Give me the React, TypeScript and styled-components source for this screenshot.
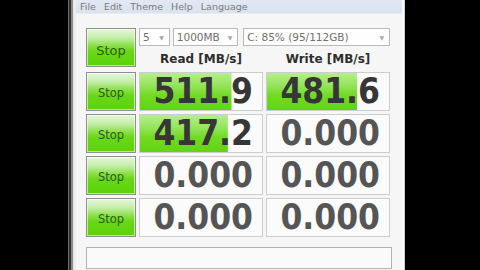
import React from "react";
import styled, { createGlobalStyle } from "styled-components";

const Global = createGlobalStyle`
  html, body { margin: 0; padding: 0; background: #000; }
  body { width: 480px; height: 270px; overflow: hidden; font-family: "DejaVu Sans", sans-serif; }
`;

const Screen = styled.div`
  display: flex;
  width: 480px;
  height: 270px;
  background: #000;
`;

const Blank = styled.div<{ $w: number }>`
  width: ${(p) => p.$w}px;
  flex: none;
  background: #000;
`;

const Window = styled.div`
  display: flex;
  width: 337px;
  flex: none;
  height: 270px;
`;

const LeftFrame = styled.div`
  width: 8px;
  flex: none;
  background: linear-gradient(
    to right,
    #6e6e6e 0px, #6e6e6e 1px,
    #2e2e2e 1px, #2e2e2e 3px,
    #8c8c8c 3px, #8c8c8c 5px,
    #e4e4e4 5px, #f2f2f2 8px
  );
`;

const RightFrame = styled.div`
  width: 5px;
  flex: none;
  background: linear-gradient(
    to right,
    #fbfbfb 0px, #fbfbfb 2px,
    #cfcfcf 2px, #cfcfcf 3px,
    #7e7e7e 3px, #5a5a5a 5px
  );
`;

const Content = styled.div`
  flex: 1;
  display: flex;
  flex-direction: column;
  background: #f6f6f6;
`;

const MenuBar = styled.div`
  height: 13px;
  display: flex;
  align-items: center;
  gap: 8px;
  padding-left: 4px;
  background: linear-gradient(to bottom, #e3e9f3, #d9e2ef);
  border-bottom: 1px solid #e8edf5;
`;

const MenuItem = styled.span`
  font-family: "DejaVu Sans", sans-serif;
  font-size: 9.5px;
  color: #7a7a7a;
  line-height: 12px;
`;

const Body = styled.div`
  padding: 14px 10px 0 10px;
  display: flex;
  flex-direction: column;
`;

const Grid = styled.div`
  display: grid;
  grid-template-columns: 50px 124px 124px;
  grid-template-rows: 41px repeat(4, 39px);
  column-gap: 3px;
  row-gap: 3px;
`;

const StopButton = styled.button<{ $main?: boolean }>`
  height: 39px;
  align-self: start;
  margin: 0;
  padding: 0;
  border: 1px solid #8f8f8f;
  box-shadow: inset 0 0 0 1px rgba(255, 255, 255, 0.55);
  background: linear-gradient(
    to bottom,
    #e6f7dc 0%,
    #c4eea8 24%,
    #93e256 42%,
    #68d816 60%,
    #5cd20a 100%
  );
  font-family: "DejaVu Sans", sans-serif;
  font-size: ${(p) => (p.$main ? "13px" : "11.5px")};
  font-weight: 400;
  color: ${(p) => (p.$main ? "#2c5e10" : "#2f5a1a")};
  display: flex;
  align-items: center;
  justify-content: center;
  padding-top: ${(p) => (p.$main ? "6px" : "2px")};
`;

const Controls = styled.div`
  grid-column: 2 / 4;
  display: flex;
  flex-direction: column;
`;

const SelectRow = styled.div`
  display: flex;
  height: 18px;
`;

const Select = styled.div<{ $w: number; $ml: number }>`
  width: ${(p) => p.$w}px;
  margin-left: ${(p) => p.$ml}px;
  height: 18px;
  box-sizing: border-box;
  border: 1px solid #b9b9b9;
  background: #fefefe;
  display: flex;
  align-items: center;
  justify-content: space-between;
  padding: 0 5px 0 3px;
  font-family: "DejaVu Sans", sans-serif;
  font-size: 10.5px;
  color: #707070;
`;

const Arrow = styled.span`
  font-size: 6px;
  color: #a8a8a8;
`;

const Headers = styled.div`
  display: grid;
  grid-template-columns: 124px 124px;
  column-gap: 3px;
  padding-top: 6px;
`;

const Header = styled.div`
  text-align: center;
  font-family: "DejaVu Sans", sans-serif;
  font-weight: bold;
  font-size: 12px;
  color: #2e2e2e;
  line-height: 14px;
`;

const Cell = styled.div<{ $pct: number }>`
  box-sizing: border-box;
  height: 39px;
  border: 1px solid #cdcdcd;
  background:
    linear-gradient(
      to bottom,
      #b6ee8c 0%,
      #93e45a 35%,
      #72da24 60%,
      #62d412 100%
    ) no-repeat 0 0 / ${(p) => p.$pct}% 100%,
    #fbfbfb;
  display: flex;
  align-items: center;
  justify-content: flex-end;
  padding-right: 9px;
  font-family: "DejaVu Sans Condensed", "DejaVu Sans", sans-serif;
  font-stretch: condensed;
  font-weight: bold;
  font-size: 35px;
  color: ${(p) => (p.$pct > 0 ? "#363636" : "#555555")};
  line-height: 1;
`;

const Comment = styled.div`
  margin-top: 10px;
  width: 306px;
  height: 22px;
  box-sizing: border-box;
  border: 1px solid #b3b3b3;
  background: #fafafa;
`;

const rows = [
  { read: "511.9", rp: 75, write: "481.6", wp: 74 },
  { read: "417.2", rp: 72, write: "0.000", wp: 0 },
  { read: "0.000", rp: 0, write: "0.000", wp: 0 },
  { read: "0.000", rp: 0, write: "0.000", wp: 0 },
];

export default function App() {
  return (
    <>
      <Global />
      <Screen>
        <Blank $w={68} />
        <Window>
          <LeftFrame />
          <Content>
            <MenuBar>
              <MenuItem>File</MenuItem>
              <MenuItem>Edit</MenuItem>
              <MenuItem>Theme</MenuItem>
              <MenuItem>Help</MenuItem>
              <MenuItem>Language</MenuItem>
            </MenuBar>
            <Body>
              <Grid>
                <StopButton $main>Stop</StopButton>
                <Controls>
                  <SelectRow>
                    <Select $w={31} $ml={0}>
                      5<Arrow>▼</Arrow>
                    </Select>
                    <Select $w={66} $ml={3}>
                      1000MB<Arrow>▼</Arrow>
                    </Select>
                    <Select $w={148} $ml={5}>
                      C: 85% (95/112GB)<Arrow>▼</Arrow>
                    </Select>
                  </SelectRow>
                  <Headers>
                    <Header>Read [MB/s]</Header>
                    <Header>Write [MB/s]</Header>
                  </Headers>
                </Controls>
                {rows.map((r, i) => (
                  <React.Fragment key={i}>
                    <StopButton>Stop</StopButton>
                    <Cell $pct={r.rp}>{r.read}</Cell>
                    <Cell $pct={r.wp}>{r.write}</Cell>
                  </React.Fragment>
                ))}
              </Grid>
              <Comment />
            </Body>
          </Content>
          <RightFrame />
        </Window>
        <Blank $w={75} />
      </Screen>
    </>
  );
}
